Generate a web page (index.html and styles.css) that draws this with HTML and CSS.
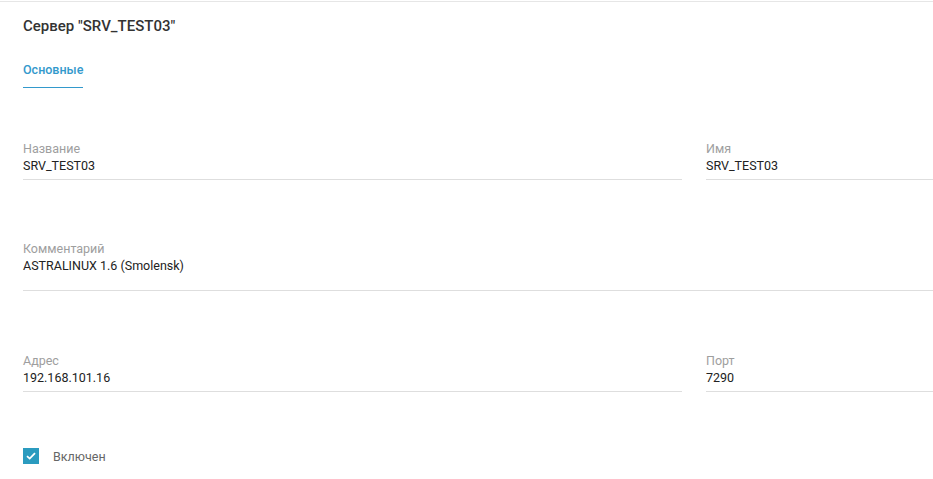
FILE: index.html
```html
<!DOCTYPE html>
<html lang="ru">
<head>
    <meta charset="UTF-8">
    <meta name="viewport" content="width=device-width, initial-scale=1.0">
    <title>Сервер</title>
    <link rel="stylesheet" href="styles.css">
</head>
<body>
    <div class="page">
        <h1 class="title">Сервер "SRV_TEST03"</h1>

        <div class="tabs">
            <a class="tab active" href="#">Основные</a>
        </div>

        <div class="form">
            <div class="row">
                <div class="field">
                    <div class="label">Название</div>
                    <div class="value">SRV_TEST03</div>
                </div>
                <div class="field">
                    <div class="label">Имя</div>
                    <div class="value">SRV_TEST03</div>
                </div>
            </div>

            <div class="row single">
                <div class="field textarea">
                    <div class="label">Комментарий</div>
                    <div class="value">ASTRALINUX 1.6 (Smolensk)</div>
                </div>
            </div>

            <div class="row">
                <div class="field">
                    <div class="label">Адрес</div>
                    <div class="value">192.168.101.16</div>
                </div>
                <div class="field">
                    <div class="label">Порт</div>
                    <div class="value">7290</div>
                </div>
            </div>

            <label class="check">
                <span class="box">
                    <svg width="10" height="8" viewBox="0 0 10 8">
                        <path d="M1 4.2 L3.7 6.6 L9 1.2" fill="none" stroke="#fff" stroke-width="1.8"/>
                    </svg>
                </span>
                <span class="check-text">Включен</span>
            </label>
        </div>
    </div>
</body>
</html>
```

FILE: styles.css
```css
body {
    font-family: Roboto, "Liberation Sans", Arial, sans-serif;
    margin: 0;
    padding: 0;
    background-color: #fff;
    color: #222;
}

.page {
    margin-top: 1px;
    border-top: 1px solid #e6e6e6;
    padding: 0 0 0 23px;
}

.title {
    margin: 0;
    padding-top: 14px;
    font-size: 15px;
    line-height: 20px;
    font-weight: 500;
    color: #333;
}

.tabs {
    display: flex;
    margin-top: 26px;
}

.tab {
    display: block;
    font-size: 12.5px;
    line-height: 16px;
    font-weight: 500;
    color: #3399cc;
    text-decoration: none;
    padding-bottom: 9px;
    border-bottom: 1px solid #3399cc;
}

.form {
    margin-top: 53px;
}

.row {
    display: grid;
    grid-template-columns: 659px 1fr;
    gap: 24px;
    margin-bottom: 61px;
}

.row.single {
    grid-template-columns: 1fr;
    margin-bottom: 62px;
}

.field {
    border-bottom: 1px solid #dedede;
    padding-bottom: 5px;
}

.field.textarea {
    padding-bottom: 16px;
}

.label {
    font-size: 12.5px;
    line-height: 16px;
    color: #9e9e9e;
    margin-bottom: 1px;
}

.value {
    font-size: 12.5px;
    line-height: 16px;
    color: #222;
}

.check {
    display: flex;
    align-items: center;
    gap: 14px;
    margin-top: -5px;
}

.box {
    width: 16px;
    height: 16px;
    background-color: #2b9bbf;
    display: flex;
    align-items: center;
    justify-content: center;
}

.check-text {
    font-size: 12.5px;
    color: #666;
}
```
